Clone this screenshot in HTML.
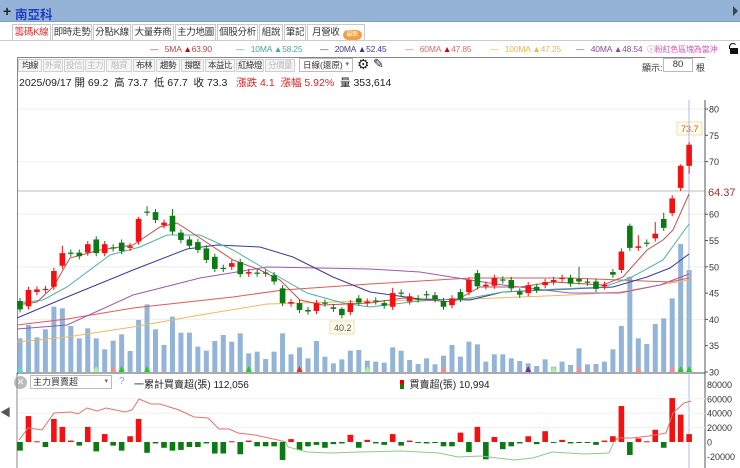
<!DOCTYPE html>
<html><head><meta charset="utf-8">
<style>
*{margin:0;padding:0;box-sizing:border-box}
body{width:740px;height:468px;overflow:hidden;background:#fff;font-family:"Liberation Sans","Noto Sans CJK TC",sans-serif;position:relative;font-size:10px;color:#333}
.abs{position:absolute;white-space:nowrap}
#hdr{left:0;top:0;width:740px;height:22px;background:#95b3d7;border-bottom:1px solid #7f9fc8}
.tab{position:absolute;top:24px;height:17px;border:1px solid #c8c8c8;border-bottom:none;font-size:9.5px;line-height:16px;text-align:center;color:#333;background:#fff;white-space:nowrap;overflow:hidden;letter-spacing:-0.3px}
.btn{position:absolute;top:59px;height:13px;border:1px solid #d0d0d0;font-size:8.5px;line-height:11px;text-align:center;color:#333;background:#f5f5f5;white-space:nowrap;overflow:hidden;letter-spacing:-0.5px}
.btn.g{color:#bbb}
.ma{position:absolute;top:44px;font-size:8.5px;white-space:nowrap;letter-spacing:-0.2px}
</style></head><body>
<div id="hdr" class="abs"></div>
<div class="abs" style="left:3px;top:3px;font-size:14px;font-weight:bold;color:#222">+</div>
<div class="abs" style="left:15px;top:4px;font-size:12.5px;font-weight:bold;color:#1c3fc4">南亞科</div>
<div class="abs" style="left:733px;top:6px;width:0;height:0;border-top:5px solid transparent;border-bottom:5px solid transparent;border-left:5px solid #444"></div>

<div class="tab" style="left:12px;width:39px;color:#e03030">籌碼K線</div>
<div class="tab" style="left:52px;width:40px">即時走勢</div>
<div class="tab" style="left:93px;width:38px">分點K線</div>
<div class="tab" style="left:132px;width:42px">大量券商</div>
<div class="tab" style="left:175px;width:41px">主力地圖</div>
<div class="tab" style="left:217px;width:41px">個股分析</div>
<div class="tab" style="left:259px;width:24px">組說</div>
<div class="tab" style="left:284px;width:22px">筆記</div>
<div class="tab" style="left:307px;width:58px;text-align:left;padding-left:4px">月營收<span style="display:inline-block;margin-left:3px;width:19px;height:10px;border-radius:5px;background:#f0a040;vertical-align:-1px;font-size:6px;color:#fff;line-height:10px;text-align:center">最新</span></div>
<div class="abs" style="left:0;top:40px;width:740px;border-top:1px solid #ccc"></div>

<div class="ma" style="left:150px;color:#b04848">—&nbsp;&nbsp; 5MA <span style="color:#c00">▲</span>63.90</div>
<div class="ma" style="left:236px;color:#4aa89a">—&nbsp;&nbsp; 10MA ▲58.25</div>
<div class="ma" style="left:320px;color:#3a3a96">—&nbsp;&nbsp; 20MA ▲52.45</div>
<div class="ma" style="left:405px;color:#e06a6a">—&nbsp;&nbsp; 60MA <span style="color:#d00">▲</span>47.85</div>
<div class="ma" style="left:490px;color:#e8b84a">—&nbsp;&nbsp; 100MA ▲47.25</div>
<div class="ma" style="left:576px;color:#8a4a9a">—&nbsp;&nbsp; 40MA ▲48.54</div>
<div class="ma" style="left:647px;top:44px;font-size:8px;color:#e050b0">ⓘ粉紅色區塊為當沖</div>
<div class="abs" style="top:43px;left:729px;width:8px;height:6px;border:1.5px solid #111;border-bottom:none;border-radius:4px 4px 0 0;border-right-color:transparent"></div>
<div class="abs" style="top:48px;left:730px;width:8px;height:6px;background:#111"></div>

<div class="abs" style="left:17px;top:57px;width:688px;height:318px;border-left:1px solid #888;border-top:1px solid #888"></div>
<div class="btn" style="left:18px;width:24px">均線</div>
<div class="btn g" style="left:43px;width:20px">外資</div>
<div class="btn g" style="left:64px;width:20px">投信</div>
<div class="btn g" style="left:85px;width:20px">主力</div>
<div class="btn g" style="left:106px;width:26px">融資</div>
<div class="btn" style="left:133px;width:22px">布林</div>
<div class="btn" style="left:156px;width:24px">趨勢</div>
<div class="btn" style="left:181px;width:23px">撐壓</div>
<div class="btn" style="left:205px;width:30px">本益比</div>
<div class="btn" style="left:236px;width:28px">紅綠燈</div>
<div class="btn g" style="left:265px;width:30px">分價量</div>
<div class="abs" style="left:299px;top:58px;width:54px;height:14px;border:1px solid #bbb;font-size:8.5px;line-height:12px;padding-left:3px;overflow:hidden">日線(還原)<span style="position:absolute;right:3px;font-size:7px;color:#666">▾</span></div>
<div class="abs" style="left:357px;top:56px;font-size:14px;color:#222">⚙</div>
<div class="abs" style="left:373px;top:56px;font-size:13px;color:#222">✎</div>
<div class="abs" style="left:642px;top:61px;font-size:9px">顯示:</div>
<div class="abs" style="left:663px;top:58px;width:30px;height:14px;border:1px solid #bbb;font-size:9.5px;line-height:12px;text-align:center">80</div>
<div class="abs" style="left:696px;top:61px;font-size:9px">根</div>
<div class="abs" style="left:19px;top:75px;font-size:10.5px;color:#222">2025/09/17 開 69.2 &nbsp;高 73.7 &nbsp;低 67.7 &nbsp;收 73.3 &nbsp;&nbsp;<span style="color:#e02020">漲跌 4.1 &nbsp;漲幅 5.92%</span> &nbsp;量 353,614</div>

<div class="abs" style="left:0;top:404px;font-size:11px;color:#555">◀</div>
<div class="abs" style="left:14px;top:376px;width:13px;height:13px;border-radius:50%;background:#bbb;color:#fff;font-size:9px;line-height:13px;text-align:center">✕</div>
<div class="abs" style="left:30px;top:375px;width:82px;height:14px;border:1px solid #bbb;font-size:9px;line-height:12px;padding-left:2px">主力買賣超<span style="position:absolute;right:3px;font-size:7px;color:#666">▾</span></div>
<div class="abs" style="left:119px;top:376px;font-size:10px;color:#8aa8d0">?</div>
<div class="abs" style="left:134px;top:376px;font-size:10px;color:#222">一累計買賣超(張) 112,056</div>
<div class="abs" style="left:400px;top:376px;font-size:10px;color:#222"><span style="display:inline-block;width:4px;height:9px;background:linear-gradient(#e00 50%,#080 50%);vertical-align:-1px"></span>&nbsp; 買賣超(張) 10,994</div>

<svg class="abs" style="left:0;top:0" width="740" height="468" id="s"></svg>
<script>
var s=document.getElementById('s'),h='';
function Y(p){return 372-(p-30)*5.26}
function X(i){return 20+i*8.47}
[80,70,60,50,40].forEach(function(p){h+='<line x1="18" x2="705" y1="'+Y(p)+'" y2="'+Y(p)+'" stroke="#eee"/>'});
h+='<line x1="18" x2="705" y1="191" y2="191" stroke="#bbb"/>';
h+='<line x1="705" x2="705" y1="100" y2="468" stroke="#555"/>';
h+='<line x1="17" x2="705" y1="373" y2="373" stroke="#555"/>';
h+='<line x1="17" x2="17" y1="373" y2="468" stroke="#888"/>';
[80,75,70,60,55,50,45,40,35,30].forEach(function(p){h+='<text x="709" y="'+(Y(p)+3.5)+'" font-size="9" fill="#333">'+p+'</text><line x1="705" x2="708" y1="'+Y(p)+'" y2="'+Y(p)+'" stroke="#555"/>'});
h+='<text x="708" y="196" font-size="11" fill="#a03030">64.37</text>';
h+='<rect x="677" y="122" width="25" height="13" fill="#fffbe8" stroke="#eee0b0"/><text x="681" y="132" font-size="9" fill="#e05050">73.7</text>';
h+='<rect x="330" y="321" width="24" height="13" fill="#fffbe8" stroke="#eee0b0"/><text x="334" y="331" font-size="9" fill="#555">40.2</text>';
var vz=[745,705,742,718,650,655,708,745,715,745,778,752,733,783,690,643,718,765,680,728,728,770,782,753,735,755,730,790,785,807,785,730,793,772,805,753,800,820,808,782,780,812,815,818,772,782,810,822,805,823,797,765,800,755,763,815,793,793,805,813,820,828,808,830,815,825,775,823,822,815,778,708,560,745,762,702,685,625,462,540];
vz.forEach(function(z,i){var t=90+z/3;h+='<rect x="'+(X(i)-2.5)+'" y="'+t+'" width="5" height="'+(372-t)+'" fill="#92b4d8"/>'});
h+='<line x1="689" x2="689" y1="100" y2="468" stroke="#a8c0e0"/>';
function pl(pts,c){h+='<polyline fill="none" stroke="'+c+'" stroke-width="1" points="'+pts+'"/>'}
pl('17,342 67,337 133,327 200,315 267,304 370,301 470,299 570,295 620,292 689,280','#f0b860');
pl('17,325 67,319 133,308 233,297 283,290 370,284 470,278 570,278 620,280 670,282 689,278','#e05a5a');
pl('17,329 67,325 133,295 200,278 267,267 370,269 420,272 470,280 503,285 570,293 620,293 660,285 689,274','#9a5ab0');
pl('17,318 67,297 133,270 187,249 217,245 260,247 293,257 333,277 370,292 420,299 470,300 503,292 570,289 613,287 647,277 670,268 689,254','#3a3a9a');
pl('17,303 43,300 67,287 110,255 140,247 167,235 200,235 233,250 267,270 307,293 343,303 370,307 420,301 470,298 503,292 537,290 603,287 630,278 663,260 689,224','#50b0a0');
pl('17,305 37,302 53,287 70,258 100,250 133,245 160,227 177,223 200,238 233,260 260,270 280,280 300,300 323,305 370,303 403,298 453,302 480,287 520,287 553,282 603,285 623,277 647,250 663,240 673,230 689,194','#c05050');
var d=[[43.5,41.9],[42.5,45.6],[45.2,45.7],[45.6,45.8],[46.2,49.2],[50.2,52.6],[52.7,52.5],[52.7,52],[52.7,54.3],[55.2,52.6],[52.6,54.3],[53.7,53.5],[54.6,53],[53.6,53.9],[54.8,59.1],[60.5,60.3],[60.4,58.9],[57.9,58.4],[59.7,56.7],[56.5,55.1],[55.2,54],[54.7,53.2],[53.5,51.3],[51.9,49.6],[49.8,49.6],[50,50.7],[50.9,48.6],[48.7,49],[48.9,48.7],[48.9,48.7],[48.4,47.2],[45.9,43.1],[43,43.3],[43.1,41.8],[41.8,41.5],[41.6,43.1],[43.2,43],[42.3,42],[42,40.8],[41.4,43.1],[44,43.2],[43.1,43.4],[43.6,43.4],[43.1,42.6],[42.4,45],[45.1,44.9],[43.4,44.4],[44,43.8],[44.8,44.6],[44.6,43.8],[43.5,42.4],[42.7,44],[45.2,43.9],[45.2,47.5],[48.8,46.3],[46.3,46.6],[46.4,47.9],[47.6,47.4],[47.5,45.9],[45.3,44.7],[45,46.5],[46.2,45.6],[46.5,47.1],[47.1,47.5],[47.7,47.9],[47.9,46.8],[47.7,47.2],[47.2,47],[47.2,45.8],[46.3,46.6],[49,48.5],[49.4,52.9],[57.8,53.6],[53.6,53.9],[54.6,54.4],[55.4,56.3],[59.1,57.4],[60.2,63],[65,69.2],[69.2,73.2]];
var hi={15:61.5,18:61,5:54,14:59.5,66:50,72:58.2,75:58.5,76:60.3,78:69.5,79:73.7,44:46,53:48,38:40.2,73:56};
d.forEach(function(c,i){var o=c[0],cl=c[1],up=cl>=o,col=up?'#f21010':'#0b7a12';var hh=hi[i]||Math.max(o,cl)+0.6,ll=(i==79?67.7:Math.min(o,cl)-0.6);if(i==38){ll=40.2;hh=42.3;}
var x=X(i);h+='<line x1="'+x+'" x2="'+x+'" y1="'+Y(hh)+'" y2="'+Y(ll)+'" stroke="'+col+'"/>';var t=Y(Math.max(o,cl)),b=Y(Math.min(o,cl));h+='<rect x="'+(x-2.8)+'" y="'+t+'" width="5.6" height="'+Math.max(1.2,b-t)+'" fill="'+col+'"/>'});
[[0,'#3ee0e0'],[9,'#9f9'],[11,'#f88'],[12,'#2c2'],[15,'#2c2'],[27,'#2c2'],[33,'#d33'],[41,'#9f9'],[50,'#f88'],[60,'#639'],[66,'#f88'],[63,'#9f9'],[73,'#f88'],[77,'#f88'],[78,'#2c2'],[79,'#2c2']].forEach(function(m){var x=X(m[0]);h+='<polygon points="'+(x-3)+',372 '+(x+3)+',372 '+x+',366" fill="'+m[1]+'"/>'});
function BY(v){return 442-v*0.72}
[80,60,40,20,0,-20].forEach(function(v){h+='<text x="707" y="'+(BY(v)+3.5)+'" font-size="9" fill="#333">'+(v?v*1000:0)+'</text>'});
[60,40,20].forEach(function(v){h+='<line x1="18" x2="705" y1="'+BY(v)+'" y2="'+BY(v)+'" stroke="#f0f0f0"/>'});
var bv=[-12,36,1,-7,32,21,2,-5,21,-13,11,-5,-12,8,32,-15,-2,-8,-12,-11,-7,-7,-2,-16,-16,1,-17,2,-6,-6,-6,-25,4,-11,-6,-4,-8,-3,-2,10,-8,3,-2,-4,11,-5,2,-1,-2,-1,-6,-6,13,-14,21,-24,7,-10,-6,-2,8,-3,15,-1,3,-2,-1,-1,-4,2,8,50,-18,5,1,17,-8,61,38,11];
bv.forEach(function(v,i){var x=X(i),a=BY(Math.max(v,0)),b=BY(Math.min(v,0));h+='<rect x="'+(x-2.8)+'" y="'+a+'" width="5.6" height="'+Math.max(1,b-a)+'" fill="'+(v>=0?'#f21010':'#0b7a12')+'"/>'});
pl('19,440 28,428 42,430 54,413 71,412 78,414 87,408 97,411 106,408 125,412 132,410 139,399 151,404 160,404 179,410 194,417 208,418 219,429 229,429 238,433 255,435 278,440 286,442','#e87070');
pl('286,442 288,447 307,452 330,453 359,452 401,451 439,453 458,457 481,456 514,460 533,458 552,452 585,454 609,453 614,442','#88cc88');
pl('614,442 618,438 632,438 649,436 666,433 673,413 684,403 691,401','#e87070');
s.innerHTML=h;
</script>
</body></html>
